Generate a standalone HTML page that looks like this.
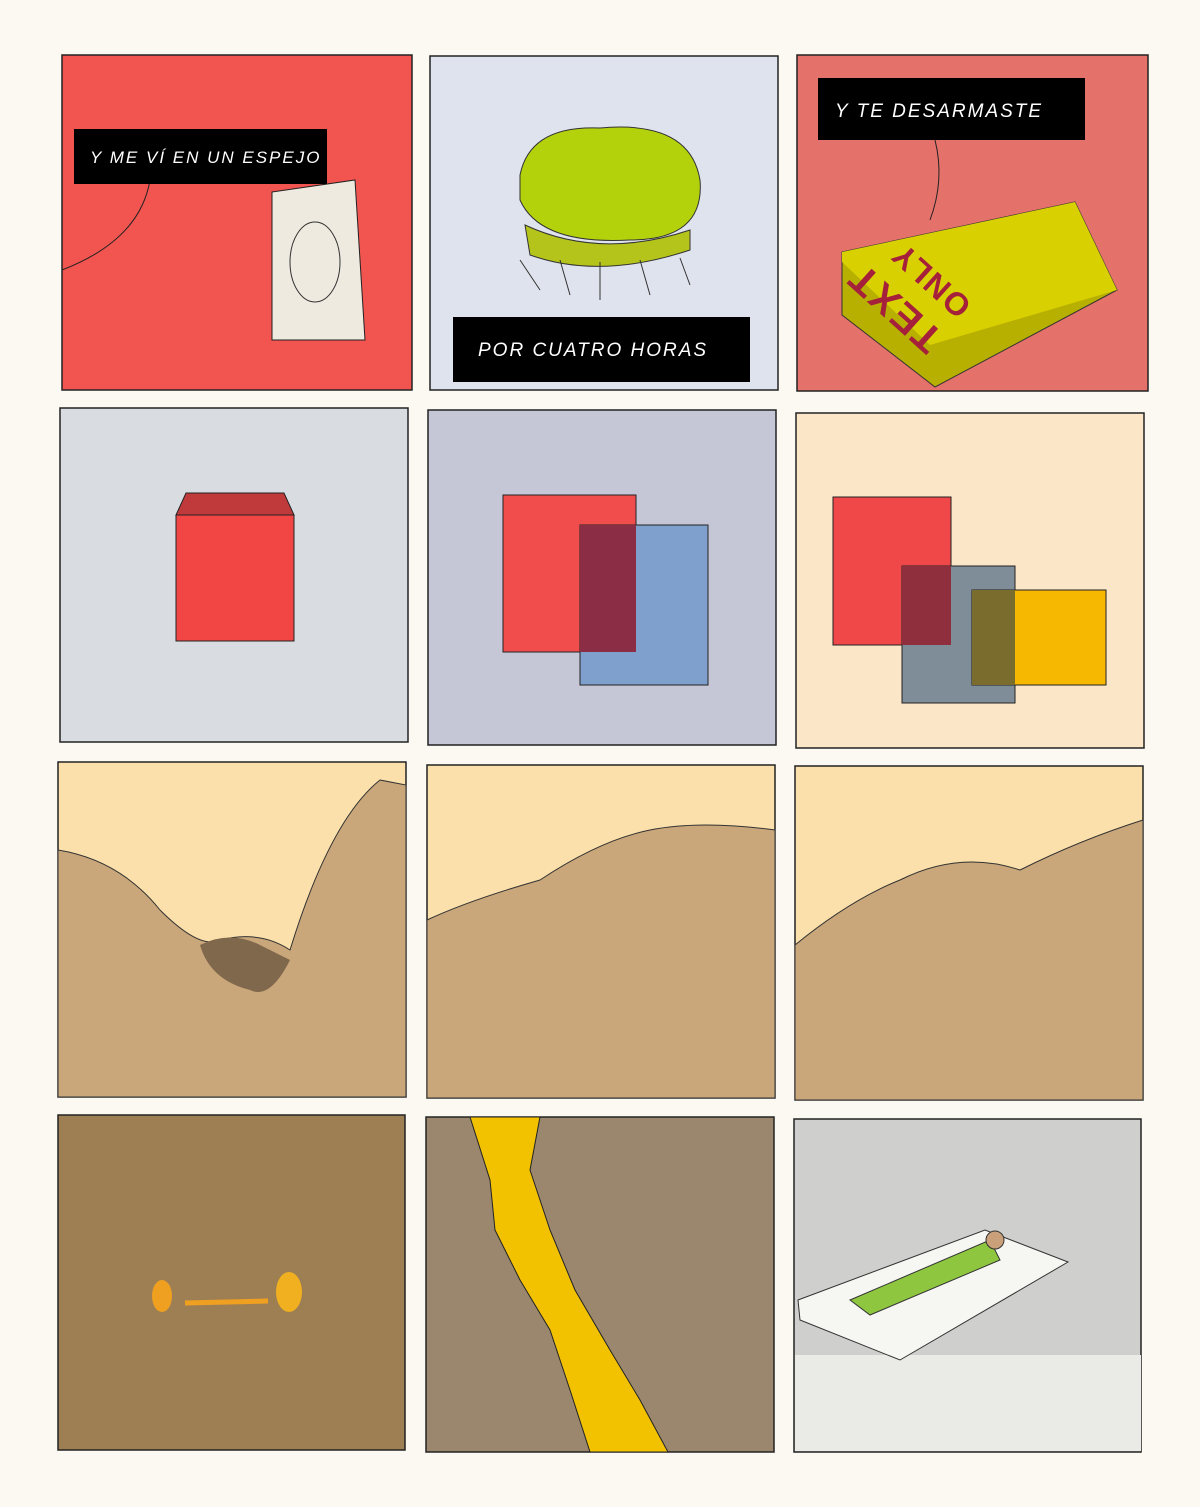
<!DOCTYPE html>
<html><head><meta charset="utf-8"><style>
html,body{margin:0;padding:0;background:#fbf9f2;}
svg{display:block}
text{font-family:"Liberation Sans",sans-serif;fill:#fff;font-style:italic;letter-spacing:2px}
</style></head><body>
<svg width="1200" height="1507" viewBox="0 0 1200 1507" xmlns="http://www.w3.org/2000/svg">
<rect width="1200" height="1507" fill="#fbf9f2"/>
<g stroke="#222" stroke-width="1.5">
<rect x="62" y="55" width="350" height="335" fill="#f25450"/>
<rect x="430" y="56" width="348" height="334" fill="#dfe3ed"/>
<rect x="797" y="55" width="351" height="336" fill="#e4716a"/>
<rect x="60" y="408" width="348" height="334" fill="#d9dde2"/>
<rect x="428" y="410" width="348" height="335" fill="#c5c6d6"/>
<rect x="796" y="413" width="348" height="335" fill="#fbe7c8"/>
<rect x="58" y="762" width="348" height="335" fill="#fbe0ab"/>
<rect x="427" y="765" width="348" height="333" fill="#fbe0ab"/>
<rect x="795" y="766" width="348" height="334" fill="#fbe0ab"/>
<rect x="58" y="1115" width="347" height="335" fill="#9e7f54"/>
<rect x="426" y="1117" width="348" height="335" fill="#9a876e"/>
<rect x="794" y="1119" width="347" height="333" fill="#cfd0cd"/>
</g>
<path d="M62 270 Q140 240 150 180" stroke="#222" fill="none"/>
<polygon points="272,192 355,180 365,340 272,340" fill="#eeeadf" stroke="#222"/>
<ellipse cx="315" cy="262" rx="25" ry="40" fill="none" stroke="#333"/>
<rect x="74" y="129" width="253" height="55" fill="#000"/>
<text x="90" y="163" font-size="17" letter-spacing="1">Y ME VÍ EN UN ESPEJO</text>
<path d="M520 175 Q530 125 600 128 Q690 120 700 180 Q705 240 630 240 Q540 245 520 200Z" fill="#b4d20c" stroke="#333"/>
<path d="M525 225 Q600 260 690 230 L690 250 Q600 280 530 255Z" fill="#b4c41a" stroke="#333"/>
<path d="M520 260 L540 290 M560 260 L570 295 M600 262 L600 300 M640 260 L650 295 M680 258 L690 285" stroke="#333"/>
<rect x="453" y="317" width="297" height="65" fill="#000"/>
<text x="478" y="356" font-size="19">POR  CUATRO HORAS</text>
<path d="M935 140 Q945 180 930 220" stroke="#222" fill="none"/>
<polygon points="842,252 1075,202 1117,290 935,387 842,315" fill="#b8b000" stroke="#333"/>
<polygon points="842,252 1075,202 1117,290 930,345 842,262" fill="#d8d000"/>
<g transform="translate(945,335) rotate(222)">
<text x="0" y="0" font-size="40" style="fill:#a5203a;font-style:normal;font-weight:bold" letter-spacing="4">TEXT</text>
<text x="0" y="42" font-size="32" style="fill:#a5203a;font-style:normal;font-weight:bold" letter-spacing="4">ONLY</text>
</g>
<rect x="818" y="78" width="267" height="62" fill="#000"/>
<text x="835" y="117" font-size="19">Y TE DESARMASTE</text>
<rect x="176" y="515" width="118" height="126" fill="#f24645" stroke="#222"/>
<polygon points="176,515 186,493 284,493 294,515" fill="#c0393b" stroke="#222"/>
<rect x="503" y="495" width="133" height="157" fill="#f24d4d" stroke="#222"/>
<rect x="580" y="525" width="128" height="160" fill="#7f9fcc" stroke="#222"/>
<rect x="580" y="525" width="56" height="127" fill="#8b2e45"/>
<rect x="833" y="497" width="118" height="148" fill="#f04848" stroke="#222"/>
<rect x="902" y="566" width="113" height="137" fill="#7e8d98" stroke="#222"/>
<rect x="902" y="566" width="49" height="79" fill="#8f2e3c"/>
<rect x="972" y="590" width="134" height="95" fill="#f6b800" stroke="#222"/>
<rect x="972" y="590" width="43" height="95" fill="#7a6c2d"/>
<path d="M58 850 Q120 860 160 910 Q200 950 220 940 Q260 930 290 950 Q330 820 380 780 L406 785 L406 1097 L58 1097Z" fill="#c9a77a" stroke="#333"/>
<path d="M200 945 Q230 930 260 945 Q280 955 290 960 Q270 1000 250 990 Q210 980 200 945Z" fill="#80684c"/>
<path d="M427 920 Q470 900 540 880 Q600 840 650 830 Q700 820 775 830 L775 1098 L427 1098Z" fill="#c9a77a" stroke="#333"/>
<path d="M795 945 Q850 900 900 880 Q960 850 1020 870 Q1080 840 1143 820 L1143 1100 L795 1100Z" fill="#c9a77a" stroke="#333"/>
<path d="M185 1303 L268 1301" stroke="#f0a020" stroke-width="5"/>
<ellipse cx="162" cy="1296" rx="10" ry="16" fill="#f0a020"/>
<ellipse cx="289" cy="1292" rx="13" ry="20" fill="#f0b020"/>
<path d="M470 1117 L540 1117 L530 1170 L550 1230 L575 1290 L610 1350 L640 1400 L668 1452 L590 1452 L570 1390 L550 1330 L520 1280 L495 1230 L490 1180Z" fill="#f2c200" stroke="#222"/>
<rect x="795" y="1355" width="346" height="96" fill="#eaeae6"/>
<polygon points="798,1300 985,1230 1068,1262 900,1360 800,1320" fill="#f6f6f2" stroke="#333"/>
<path d="M850 1300 L990 1240 L1000 1260 L870 1315Z" fill="#8ec63f" stroke="#333"/>
<circle cx="995" cy="1240" r="9" fill="#c9a07a" stroke="#333"/>
</svg>
</body></html>
